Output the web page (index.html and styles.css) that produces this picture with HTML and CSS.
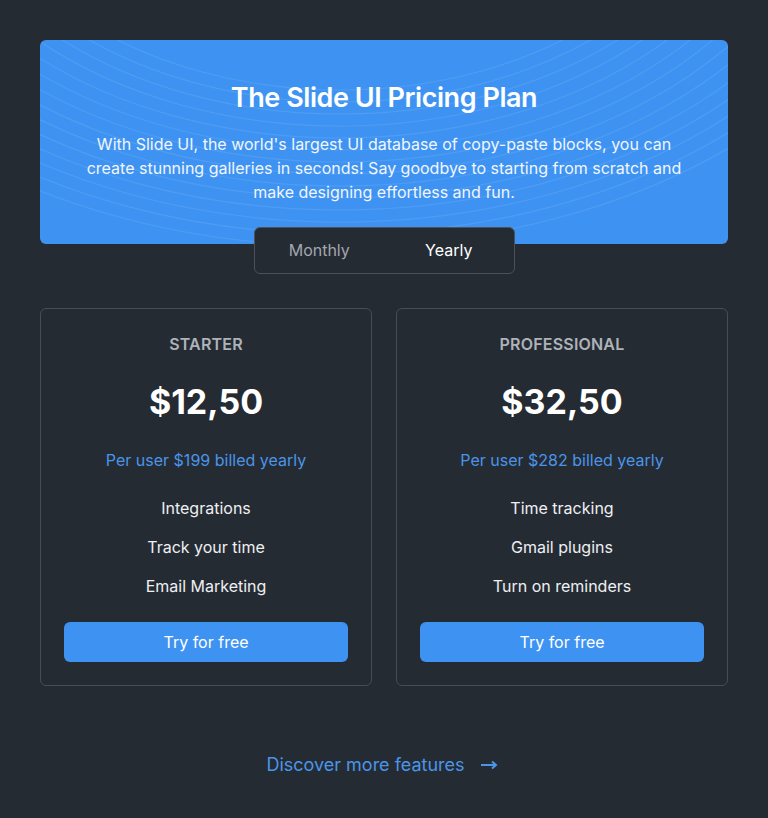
FILE: index.html
```html
<!DOCTYPE html>
<html>
<head>
<meta charset="utf-8">
<link rel="stylesheet" href="styles.css">
</head>
<body>
<main class="page">
  <section class="hero">
    <svg class="hero-bg" width="688" height="204" viewBox="0 0 688 204" aria-hidden="true">
      <g fill="none" stroke="#ffffff" stroke-opacity="0.09" stroke-width="1.2">
        <ellipse cx="300" cy="-210" rx="377" ry="260"/>
        <ellipse cx="300" cy="-210" rx="394" ry="272"/>
        <ellipse cx="300" cy="-210" rx="412" ry="284"/>
        <ellipse cx="300" cy="-210" rx="429" ry="296"/>
        <ellipse cx="300" cy="-210" rx="447" ry="308"/>
        <ellipse cx="300" cy="-210" rx="464" ry="320"/>
        <ellipse cx="300" cy="-210" rx="481" ry="332"/>
        <ellipse cx="300" cy="-210" rx="499" ry="344"/>
        <ellipse cx="300" cy="-210" rx="516" ry="356"/>
        <ellipse cx="300" cy="-210" rx="534" ry="368"/>
        <ellipse cx="300" cy="-210" rx="551" ry="380"/>
        <ellipse cx="300" cy="-210" rx="568" ry="392"/>
        <ellipse cx="300" cy="-210" rx="586" ry="404"/>
        <ellipse cx="300" cy="-210" rx="603" ry="416"/>
      </g>
    </svg>
    <h1 class="hero-title">The Slide UI Pricing Plan</h1>
    <p class="hero-text">With Slide UI, the world's largest UI database of copy-paste blocks, you can create stunning galleries in seconds! Say goodbye to starting from scratch and make designing effortless and fun.</p>
  </section>
  <div class="toggle">
    <button class="toggle-btn">Monthly</button>
    <button class="toggle-btn active">Yearly</button>
  </div>
  <section class="cards">
    <article class="card">
      <h2 class="plan">STARTER</h2>
      <div class="price">$12,50</div>
      <div class="billed">Per user $199 billed yearly</div>
      <ul class="features">
        <li>Integrations</li>
        <li>Track your time</li>
        <li>Email Marketing</li>
      </ul>
      <button class="cta">Try for free</button>
    </article>
    <article class="card">
      <h2 class="plan">PROFESSIONAL</h2>
      <div class="price">$32,50</div>
      <div class="billed">Per user $282 billed yearly</div>
      <ul class="features">
        <li>Time tracking</li>
        <li>Gmail plugins</li>
        <li>Turn on reminders</li>
      </ul>
      <button class="cta">Try for free</button>
    </article>
  </section>
  <a class="discover" href="#">Discover more features
    <svg class="arrow" width="18" height="10" viewBox="0 0 18 10" aria-hidden="true"><path d="M1 5h15M12 1.5L16 5l-4 3.5" fill="none" stroke="currentColor" stroke-width="2"/></svg>
  </a>
</main>
</body>
</html>
```
FILE: styles.css
```css
* { box-sizing: border-box; }
html, body { margin: 0; padding: 0; }
body {
  background: #252b33;
  font-family: Inter, "Noto Sans", sans-serif;
  color: #ffffff;
  width: 768px;
  height: 818px;
  overflow: hidden;
}
.page {
  padding: 40px 40px 0;
  display: flex;
  flex-direction: column;
  align-items: center;
}
.hero {
  position: relative;
  width: 688px;
  height: 204px;
  background: #3e93f2;
  border-radius: 6px;
  overflow: hidden;
  text-align: center;
  padding-top: 40px;
}
.hero-bg {
  position: absolute;
  left: 0;
  top: 0;
}
.hero-title {
  position: relative;
  margin: 0;
  font-size: 27px;
  line-height: 36px;
  font-weight: 600;
  letter-spacing: -0.45px;
}
.hero-text {
  position: relative;
  margin: 16px auto 0;
  width: 620px;
  font-size: 16px;
  line-height: 24px;
  color: #f1f6fe;
}
.toggle {
  margin-top: -17px;
  position: relative;
  width: 261px;
  height: 47px;
  background: #252b33;
  border: 1px solid #4b5159;
  border-radius: 6px;
  display: grid;
  grid-template-columns: 1fr 1fr;
}
.toggle-btn {
  background: none;
  border: 0;
  font-family: inherit;
  font-size: 16px;
  color: #a2a7ad;
  padding: 0 0 1px;
}
.toggle-btn.active { color: #ffffff; }
.cards {
  margin-top: 34px;
  width: 688px;
  display: grid;
  grid-template-columns: 1fr 1fr;
  gap: 24px;
}
.card {
  border: 1px solid #474d55;
  border-radius: 6px;
  padding: 23px 23px 23px;
  text-align: center;
  height: 378px;
  display: flex;
  flex-direction: column;
}
.plan {
  margin: 0;
  font-size: 16px;
  line-height: 24px;
  font-weight: 600;
  color: #aeb3b9;
  letter-spacing: 0.2px;
}
.price {
  margin-top: 24px;
  font-size: 34px;
  line-height: 44px;
  font-weight: 700;
}
.billed {
  margin-top: 24px;
  font-size: 16px;
  line-height: 24px;
  color: #4a95e8;
}
.features {
  list-style: none;
  margin: 24px 0 0;
  padding: 0;
  display: flex;
  flex-direction: column;
  gap: 15px;
}
.features li {
  font-size: 16px;
  line-height: 24px;
  color: #eef0f2;
}
.cta {
  margin-top: 24px;
  height: 40px;
  border: 0;
  border-radius: 6px;
  background: #3e93f2;
  color: #ffffff;
  font-family: inherit;
  font-size: 16px;
  width: 100%;
}
.discover {
  margin-top: 67px;
  display: flex;
  align-items: center;
  gap: 15px;
  color: #4a95e8;
  text-decoration: none;
  font-size: 18px;
  line-height: 24px;
}
.arrow { display: block; margin-right: 4px; }
```
